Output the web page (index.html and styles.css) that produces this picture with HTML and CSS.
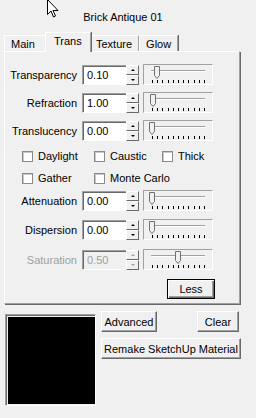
FILE: index.html
```html
<!DOCTYPE html>
<html>
<head>
<meta charset="utf-8">
<link rel="stylesheet" href="styles.css">
</head>
<body>
<div class="dlg">
  <div class="title">Brick Antique 01</div>
  <div class="tabs">
    <div class="tab first">Main</div>
    <div class="tab sel">Trans</div>
    <div class="tab">Texture</div>
    <div class="tab">Glow</div>
  </div>
  <div class="panel">
    <div class="row r1">
      <span class="lbl">Transparency</span>
      <span class="edit">0.10</span>
      <span class="spin"><i class="up"></i><i class="dn"></i></span>
      <span class="slider"><svg width="68" height="19" viewBox="0 0 68 19"><rect x="7" y="5" width="54" height="1" fill="#a0a0a0"/><rect x="7" y="6" width="54" height="1" fill="#fff"/><g fill="#000"><rect x="8" y="15" width="1" height="3"/><rect x="13" y="15" width="1" height="3"/><rect x="18" y="15" width="1" height="3"/><rect x="24" y="15" width="1" height="3"/><rect x="29" y="15" width="1" height="3"/><rect x="34" y="15" width="1" height="3"/><rect x="39" y="15" width="1" height="3"/><rect x="44" y="15" width="1" height="3"/><rect x="50" y="15" width="1" height="3"/><rect x="55" y="15" width="1" height="3"/><rect x="60" y="15" width="1" height="3"/></g><path d="M10.5 1.5h5v9l-2.5 3l-2.5-3z" fill="#f0f0f0" stroke="#707070"/></svg></span>
    </div>
    <div class="row r2">
      <span class="lbl">Refraction</span>
      <span class="edit">1.00</span>
      <span class="spin"><i class="up"></i><i class="dn"></i></span>
      <span class="slider"><svg width="68" height="19" viewBox="0 0 68 19"><rect x="7" y="5" width="54" height="1" fill="#a0a0a0"/><rect x="7" y="6" width="54" height="1" fill="#fff"/><g fill="#000"><rect x="8" y="15" width="1" height="3"/><rect x="13" y="15" width="1" height="3"/><rect x="18" y="15" width="1" height="3"/><rect x="24" y="15" width="1" height="3"/><rect x="29" y="15" width="1" height="3"/><rect x="34" y="15" width="1" height="3"/><rect x="39" y="15" width="1" height="3"/><rect x="44" y="15" width="1" height="3"/><rect x="50" y="15" width="1" height="3"/><rect x="55" y="15" width="1" height="3"/><rect x="60" y="15" width="1" height="3"/></g><path d="M6.5 1.5h5v9l-2.5 3l-2.5-3z" fill="#f0f0f0" stroke="#707070"/></svg></span>
    </div>
    <div class="row r3">
      <span class="lbl">Translucency</span>
      <span class="edit">0.00</span>
      <span class="spin"><i class="up"></i><i class="dn"></i></span>
      <span class="slider"><svg width="68" height="19" viewBox="0 0 68 19"><rect x="7" y="5" width="54" height="1" fill="#a0a0a0"/><rect x="7" y="6" width="54" height="1" fill="#fff"/><g fill="#000"><rect x="8" y="15" width="1" height="3"/><rect x="13" y="15" width="1" height="3"/><rect x="18" y="15" width="1" height="3"/><rect x="24" y="15" width="1" height="3"/><rect x="29" y="15" width="1" height="3"/><rect x="34" y="15" width="1" height="3"/><rect x="39" y="15" width="1" height="3"/><rect x="44" y="15" width="1" height="3"/><rect x="50" y="15" width="1" height="3"/><rect x="55" y="15" width="1" height="3"/><rect x="60" y="15" width="1" height="3"/></g><path d="M5.5 1.5h5v9l-2.5 3l-2.5-3z" fill="#f0f0f0" stroke="#707070"/></svg></span>
    </div>
    <div class="checks c1">
      <label class="chk w1"><span class="box"></span>Daylight</label>
      <label class="chk w2"><span class="box"></span>Caustic</label>
      <label class="chk"><span class="box"></span>Thick</label>
    </div>
    <div class="checks c2">
      <label class="chk w1"><span class="box"></span>Gather</label>
      <label class="chk w2"><span class="box"></span>Monte Carlo</label>
    </div>
    <div class="row r4">
      <span class="lbl">Attenuation</span>
      <span class="edit">0.00</span>
      <span class="spin"><i class="up"></i><i class="dn"></i></span>
      <span class="slider"><svg width="68" height="19" viewBox="0 0 68 19"><rect x="7" y="5" width="54" height="1" fill="#a0a0a0"/><rect x="7" y="6" width="54" height="1" fill="#fff"/><g fill="#000"><rect x="8" y="15" width="1" height="3"/><rect x="13" y="15" width="1" height="3"/><rect x="18" y="15" width="1" height="3"/><rect x="24" y="15" width="1" height="3"/><rect x="29" y="15" width="1" height="3"/><rect x="34" y="15" width="1" height="3"/><rect x="39" y="15" width="1" height="3"/><rect x="44" y="15" width="1" height="3"/><rect x="50" y="15" width="1" height="3"/><rect x="55" y="15" width="1" height="3"/><rect x="60" y="15" width="1" height="3"/></g><path d="M5.5 1.5h5v9l-2.5 3l-2.5-3z" fill="#f0f0f0" stroke="#707070"/></svg></span>
    </div>
    <div class="row r5">
      <span class="lbl">Dispersion</span>
      <span class="edit">0.00</span>
      <span class="spin"><i class="up"></i><i class="dn"></i></span>
      <span class="slider"><svg width="68" height="19" viewBox="0 0 68 19"><rect x="7" y="5" width="54" height="1" fill="#a0a0a0"/><rect x="7" y="6" width="54" height="1" fill="#fff"/><g fill="#000"><rect x="8" y="15" width="1" height="3"/><rect x="13" y="15" width="1" height="3"/><rect x="18" y="15" width="1" height="3"/><rect x="24" y="15" width="1" height="3"/><rect x="29" y="15" width="1" height="3"/><rect x="34" y="15" width="1" height="3"/><rect x="39" y="15" width="1" height="3"/><rect x="44" y="15" width="1" height="3"/><rect x="50" y="15" width="1" height="3"/><rect x="55" y="15" width="1" height="3"/><rect x="60" y="15" width="1" height="3"/></g><path d="M5.5 1.5h5v9l-2.5 3l-2.5-3z" fill="#f0f0f0" stroke="#707070"/></svg></span>
    </div>
    <div class="row r6 dis">
      <span class="lbl">Saturation</span>
      <span class="edit">0.50</span>
      <span class="spin"><i class="up"></i><i class="dn"></i></span>
      <span class="slider"><svg width="68" height="19" viewBox="0 0 68 19"><rect x="7" y="5" width="54" height="1" fill="#a0a0a0"/><rect x="7" y="6" width="54" height="1" fill="#fff"/><g fill="#000"><rect x="8" y="15" width="1" height="3"/><rect x="13" y="15" width="1" height="3"/><rect x="18" y="15" width="1" height="3"/><rect x="24" y="15" width="1" height="3"/><rect x="29" y="15" width="1" height="3"/><rect x="34" y="15" width="1" height="3"/><rect x="39" y="15" width="1" height="3"/><rect x="44" y="15" width="1" height="3"/><rect x="50" y="15" width="1" height="3"/><rect x="55" y="15" width="1" height="3"/><rect x="60" y="15" width="1" height="3"/></g><path d="M31.5 1.5h5v9l-2.5 3l-2.5-3z" fill="#f0f0f0" stroke="#707070"/></svg></span>
    </div>
    <div class="lessrow"><button class="btn def">Less</button></div>
  </div>
  <div class="bottom">
    <div class="swatch"><div class="black"></div></div>
    <div class="btns">
      <div class="btnrow">
        <button class="btn adv">Advanced</button>
        <button class="btn clr">Clear</button>
      </div>
      <button class="btn remake">Remake SketchUp Material</button>
    </div>
  </div>
</div>
<svg class="cursor" width="14" height="20" viewBox="0 0 14 20"><path d="M0.5 0.5v15l3.5-3.5l2.5 6l2-1l-2.5-5.5h5z" fill="#fff" stroke="#000"/></svg>
</body>
</html>
```
FILE: styles.css
```css
html, body {
  margin: 0;
  padding: 0;
  background: #f0f0f0;
}
body {
  font-family: "Liberation Sans", Arial, sans-serif;
  font-size: 11px;
  color: #000;
  width: 256px;
  height: 418px;
  overflow: hidden;
  position: relative;
}
.dlg {
  padding-left: 4px;
  width: 237px;
}
.title {
  height: 33px;
  line-height: 34px;
  text-align: center;
  padding-left: 1px;
}
.tabs {
  display: flex;
  height: 18px;
  align-items: flex-end;
  position: relative;
  z-index: 1;
}
.tab {
  height: 16px;
  line-height: 16px;
  padding: 0 6px;
  border-top: 1px solid #fff;
  border-left: 1px solid #fff;
  border-right: 1px solid #a0a0a0;
  box-shadow: 1px 0 0 #696969;
  margin-top: 2px;
  box-sizing: border-box;
  background: #f0f0f0;
  white-space: nowrap;
}
.tab.first { width: 43px; }
.tab.sel {
  height: 20px;
  margin: 0 -2px 0 -2px;
  padding: 0 8px;
  line-height: 17px;
  position: relative;
  z-index: 2;
  margin-bottom: -1px;
  width: 46px;
}
.panel {
  border-top: 1px solid #fff;
  border-left: 1px solid #fff;
  border-right: 1px solid #a0a0a0;
  border-bottom: 1px solid #a0a0a0;
  box-shadow: 1px 1px 0 #696969;
  height: 253px;
  width: 236px;
  box-sizing: border-box;
  padding-top: 12px;
}
.row {
  display: flex;
  align-items: center;
  height: 21px;
  white-space: nowrap;
}
.r2, .r3 { margin-top: 7px; }
.r4 { margin-top: 4px; }
.r5 { margin-top: 8px; }
.r6 { margin-top: 9px; }
.lbl {
  width: 72px;
  text-align: right;
  margin-right: 5px;
}
.edit {
  width: 44px;
  height: 20px;
  box-sizing: border-box;
  background: #fff;
  border-top: 1px solid #a0a0a0;
  border-left: 1px solid #a0a0a0;
  border-bottom: 1px solid #fff;
  border-right: 0;
  box-shadow: inset 1px 1px 0 #696969;
  padding: 2px 0 0 4px;
  line-height: 14px;
}
.spin {
  width: 13px;
  height: 20px;
  display: flex;
  flex-direction: column;
  margin-right: 4px;
}
.spin i {
  flex: 1;
  border-top: 1px solid #fff;
  border-left: 1px solid #fff;
  border-right: 1px solid #696969;
  border-bottom: 1px solid #696969;
  background: #f0f0f0;
  position: relative;
}
.spin i::after {
  content: "";
  position: absolute;
  left: 4px;
  top: 3px;
  border-left: 2px solid transparent;
  border-right: 2px solid transparent;
}
.spin .up::after { border-bottom: 2px solid #000; }
.spin .dn::after { border-top: 2px solid #000; }
.slider {
  width: 70px;
  height: 21px;
  box-sizing: border-box;
  border-top: 1px solid #a0a0a0;
  border-left: 1px solid #a0a0a0;
  border-right: 1px solid #fff;
  border-bottom: 1px solid #fff;
  display: block;
}
.slider svg { display: block; }
.dis .lbl, .dis .edit { color: #a0a0a0; }
.dis .edit { background: #f0f0f0; }
.dis .spin .up::after { border-bottom-color: #a0a0a0; }
.dis .spin .dn::after { border-top-color: #a0a0a0; }
.checks {
  display: flex;
  padding-left: 17px;
  height: 16px;
  align-items: center;
  white-space: nowrap;
}
.c1 { margin-top: 7px; }
.c2 { margin-top: 6px; }
.chk {
  display: flex;
  align-items: center;
  white-space: nowrap;
  flex-shrink: 0;
}
.chk.w1 { width: 72px; }
.chk.w2 { width: 68px; }
.box {
  width: 11px;
  height: 11px;
  background: #fff;
  border: 1px solid #8a8a8a;
  box-sizing: border-box;
  box-shadow: inset 1px 1px 0 #c8c8c8;
  margin-right: 5px;
  flex-shrink: 0;
}
.lessrow {
  display: flex;
  padding-left: 162px;
  margin-top: 9px;
}
.btn {
  font-family: "Liberation Sans", Arial, sans-serif;
  font-size: 11px;
  color: #000;
  background: #f0f0f0;
  border-top: 1px solid #fff;
  border-left: 1px solid #fff;
  border-right: 1px solid #696969;
  border-bottom: 1px solid #696969;
  box-shadow: inset -1px -1px 0 #a0a0a0;
  padding: 0;
  height: 21px;
  box-sizing: border-box;
  margin: 0;
  white-space: nowrap;
}
.btn.def {
  width: 48px;
  border: 1px solid #000;
  box-shadow: inset 1px 1px 0 #fff, inset -1px -1px 0 #696969, inset -2px -2px 0 #a0a0a0;
  height: 20px;
}
.bottom {
  display: flex;
  margin-top: 7px;
}
.swatch {
  margin-top: 3px;
  margin-left: 1px;
  width: 92px;
  height: 92px;
  box-sizing: border-box;
  border-top: 1px solid #a0a0a0;
  border-left: 1px solid #a0a0a0;
  border-right: 1px solid #fff;
  border-bottom: 1px solid #fff;
  box-shadow: inset 1px 1px 0 #696969;
  padding: 2px 0 0 2px;
}
.black {
  width: 87px;
  height: 87px;
  background: #000;
}
.btns {
  margin-left: 5px;
  display: flex;
  flex-direction: column;
}
.btnrow {
  display: flex;
  justify-content: space-between;
  width: 138px;
  margin-bottom: 6px;
}
.adv { width: 56px; }
.clr { width: 42px; }
.remake { width: 140px; }
.cursor {
  position: absolute;
  left: 47px;
  top: -1px;
}
```
